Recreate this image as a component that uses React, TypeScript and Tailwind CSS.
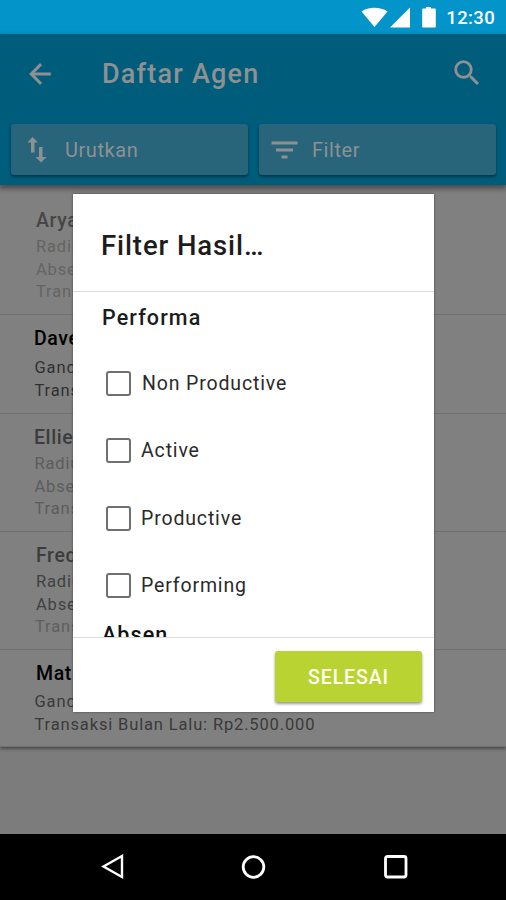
type Line = { text: string; faint?: boolean };
type Agent = { name: string; nameClass: string; height: string; gap: string; lines: Line[]; lineClass: string };

const agents: Agent[] = [
  {
    name: "Arya", nameClass: "text-[#464646] pl-[2px]", height: "h-[118px]", gap: "mt-0", lineClass: "text-[#646464] pl-[2px]",
    lines: [{ text: "Radius" }, { text: "Absen" }, { text: "Transaksi" }],
  },
  {
    name: "Dave", nameClass: "text-black", height: "h-[99px]", gap: "mt-[3px]", lineClass: "text-[#303030] pl-[0.5px]",
    lines: [{ text: "Gandaria" }, { text: "Transaksi" }],
  },
  {
    name: "Ellie", nameClass: "text-[#3c3c3c]", height: "h-[118px]", gap: "mt-0", lineClass: "text-[#5c5c5c] pl-[0.5px]",
    lines: [{ text: "Radius" }, { text: "Absen" }, { text: "Transaksi" }],
  },
  {
    name: "Fred", nameClass: "text-[#3c3c3c] pl-[2px]", height: "h-[118px]", gap: "mt-0", lineClass: "text-[#404040] pl-[2px]",
    lines: [{ text: "Radius" }, { text: "Absen" }, { text: "Transaksi", faint: true }],
  },
  {
    name: "Mat", nameClass: "text-black pl-[2px]", height: "h-[97px]", gap: "mt-[2px]", lineClass: "text-[#3a3a3a] pl-[0.5px]",
    lines: [{ text: "Gandaria" }, { text: "Transaksi Bulan Lalu: Rp2.500.000" }],
  },
];

const options = ["Non Productive", "Active", "Productive", "Performing"];

function StatusBar() {
  return (
    <div className="flex h-[34px] items-center justify-end bg-[#0395c9] text-white">
      <svg width="80" height="34" viewBox="0 0 80 34" fill="currentColor" className="shrink-0">
        <path d="M0.500 11.500C7.500 6.500 19 6.500 26.500 11.500L13.500 27z" />
        <path d="M49 7.500V27.500H29z" />
        <path d="M65 7h5v1.500h4a.8.8 0 0 1 .8.8v17.400a.8.8 0 0 1-.8.8H62a.8.8 0 0 1-.8-.8V9.300a.8.8 0 0 1 .8-.8h3z" />
      </svg>
      <span className="mt-[2px] mr-[11px] ml-[5px] text-[18.5px] leading-[34px] font-medium tracking-[0.35px]">12:30</span>
    </div>
  );
}

function Header() {
  return (
    <header className="relative z-10 flex h-[151px] flex-col bg-[#005c7b] text-[#8f9091] shadow-[0_3px_5px_1px_rgba(0,0,0,0.4)]">
      <div className="flex h-[90px] items-start pt-[24px]">
        <svg width="32" height="32" viewBox="0 0 24 24" fill="currentColor" stroke="currentColor" strokeWidth="0.300" className="ml-[24px]">
          <path d="M20 11H7.830l5.590-5.590L12 4l-8 8 8 8 1.410-1.410L7.830 13H20z" />
        </svg>
        <h1 className="ml-[46px] text-[27px] leading-[32px] font-medium tracking-[1.2px]">Daftar Agen</h1>
        <svg width="34" height="34" viewBox="0 0 24 24" fill="currentColor" className="-mt-[2px] mr-[22px] ml-auto">
          <path d="M15.500 14h-.79l-.28-.27A6.471 6.471 0 0 0 16 9.500 6.500 6.500 0 1 0 9.500 16c1.610 0 3.090-.59 4.230-1.570l.27.28v.79l5 4.990L20.490 19l-4.990-5zm-6 0a4.500 4.500 0 1 1 0-9 4.500 4.500 0 0 1 0 9z" />
        </svg>
      </div>
      <div className="flex gap-[11px] pr-[10px] pl-[11px] text-[20px] tracking-[0.55px]">
        <button className="flex h-[51px] flex-1 items-center rounded-[3px] bg-[#28657b] shadow-[0_2px_3px_rgba(0,0,0,0.4)]">
          <svg width="20" height="26" viewBox="0 0 20 26" fill="currentColor" className="ml-[16px]">
            <path d="M5.500 0L11 5.500H7.500V15.500H4V5.500H.5zM12 10h3.500v10h4L14 25.500 8.500 20H12z" />
          </svg>
          <span className="ml-[18px]">Urutkan</span>
        </button>
        <button className="flex h-[51px] flex-1 items-center rounded-[3px] bg-[#28657b] shadow-[0_2px_3px_rgba(0,0,0,0.4)]">
          <svg width="27" height="18" viewBox="0 0 27 18" fill="currentColor" className="ml-[12px]">
            <path d="M0.500 0.500h26v3h-26zM5 7.500h17v3H5zM10.500 14.500h6v3h-6z" />
          </svg>
          <span className="ml-[14px]">Filter</span>
        </button>
      </div>
    </header>
  );
}

function AgentRow({ agent }: { agent: Agent }) {
  return (
    <section className={`${agent.height} border-b border-[#707070] pl-[34px]`}>
      <h2 className={`pt-[12px] text-[19.5px] leading-[24px] font-medium tracking-[0.6px] ${agent.nameClass}`}>{agent.name}</h2>
      <div className={`${agent.gap} pt-[3px] text-[16.5px] leading-[22.5px] tracking-[0.850px] ${agent.lineClass}`}>
        {agent.lines.map((line) => (
          <p key={line.text} className={line.faint ? "-ml-[1px] text-[#5f5f5f]" : ""}>{line.text}</p>
        ))}
      </div>
    </section>
  );
}

function FilterDialog() {
  return (
    <div role="dialog" className="absolute top-[194px] left-[73px] z-20 flex h-[518px] w-[361px] flex-col bg-white shadow-[0_0_2px_rgba(0,0,0,0.5)]">
      <h2 className="h-[98px] border-b border-[#dcdcdc] pt-[36px] pl-[28px] text-[27.5px] leading-[32px] font-medium tracking-[0.9px] text-[#1c1c1c]">
        Filter Hasil…
      </h2>
      <div className="h-[345px] overflow-hidden text-[#111]">
        <h3 className="h-[57.5px] pt-[13px] pl-[29px] text-[21.5px] leading-[26px] font-medium tracking-[1.1px] text-[#1c1c1c]">Performa</h3>
        {options.map((option) => (
          <label key={option} className="flex h-[67.5px] items-center pl-[33px] text-[19.5px] tracking-[0.85px] text-[#2a2a2a]">
            <span className={`size-[25px] rounded-[3px] border-2 border-[#707070] ${option === "Non Productive" ? "mr-[11px]" : "mr-[10px]"}`} />
            {option}
          </label>
        ))}
        <h3 className="pt-[1px] pl-[29px] text-[21.5px] leading-[28px] font-medium tracking-[1.1px]">Absen</h3>
      </div>
      <div className="flex flex-1 items-start justify-end border-t border-[#dcdcdc] pt-[13px] pr-[12px]">
        <button className="h-[51px] w-[147px] rounded-[3px] bg-[#b9d432] pt-[2px] text-[19.5px] font-medium tracking-[0.9px] text-[#fffff0] shadow-[0_2px_3px_rgba(0,0,0,0.4)]">
          SELESAI
        </button>
      </div>
    </div>
  );
}

function NavigationBar() {
  return (
    <nav className="flex h-[66px] items-center justify-between bg-black pr-[97px] pb-[1px] pl-[100px] text-white">
      <svg width="26" height="28" viewBox="0 0 26 28" fill="none" stroke="currentColor" strokeWidth="2.400">
        <path d="M22 3V24L3.500 13.500z" />
      </svg>
      <svg width="26" height="26" viewBox="0 0 26 26" fill="none" stroke="currentColor" strokeWidth="2.800" className="-ml-[2px]">
        <circle cx="12.500" cy="13" r="10.300" />
      </svg>
      <svg width="26" height="26" viewBox="0 0 26 26" fill="none" stroke="currentColor" strokeWidth="2.800">
        <rect x="2.500" y="2.500" width="20.500" height="20.500" rx="2" />
      </svg>
    </nav>
  );
}

export default function App() {
  return (
    <div className="relative flex h-[900px] w-[506px] flex-col overflow-hidden bg-[#7c7c7c] font-[Roboto,sans-serif]">
      <StatusBar />
      <Header />
      <main className="flex-1">
        <div className="bg-[#808080] pt-[12px] shadow-[0_2px_3px_rgba(0,0,0,0.4)]">
          {agents.map((agent) => (
            <AgentRow key={agent.name} agent={agent} />
          ))}
        </div>
      </main>
      <NavigationBar />
      <FilterDialog />
    </div>
  );
}
